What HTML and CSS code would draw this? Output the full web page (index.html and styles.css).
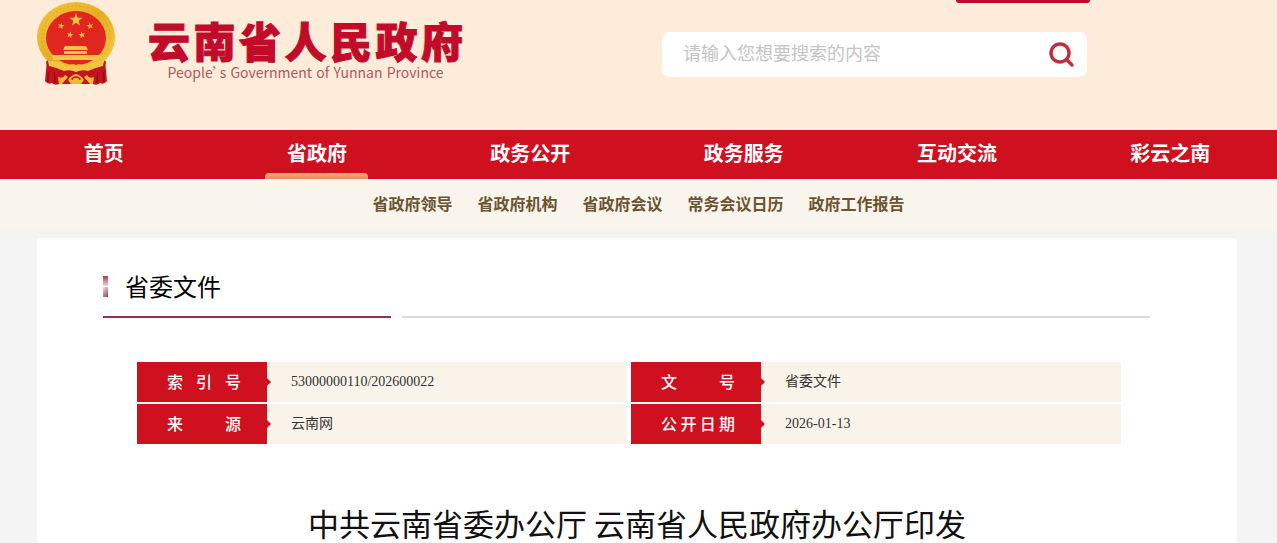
FILE: index.html
```html
<!DOCTYPE html>
<html lang="zh-CN">
<head>
<meta charset="utf-8">
<meta name="viewport" content="width=device-width, initial-scale=1">
<title>云南省人民政府</title>
<link rel="stylesheet" href="styles.css">
</head>
<body>
<header class="header">
  <a class="brand" href="#">
    <svg class="emblem" viewBox="0 0 80 86" aria-hidden="true">
      <defs>
        <linearGradient id="gold" x1="0" y1="0" x2="1" y2="1">
          <stop offset="0" stop-color="#f3c63c"/><stop offset=".5" stop-color="#e5ae24"/><stop offset="1" stop-color="#f6cf45"/>
        </linearGradient>
        <path id="star" d="M0-7 1.6-2.2H6.7L2.6.8 4.1 5.7 0 2.7-4.1 5.7-2.6.8-6.7-2.2H-1.6Z"/>
      </defs>
      <path d="M11 60 9 81Q12 85 16 83Q19 86 23 84H57Q61 86 64 83Q68 85 71 81L69 60Z" fill="#c5131c"/>
      <path d="M13 64 12 82M18 66 19 83M67 64 68 82M62 66 61 83" stroke="#8f0d18" stroke-width="1.5"/>
      <ellipse cx="40" cy="37" rx="39" ry="35" fill="url(#gold)"/>
      <path d="M10 61Q40 76 70 61L68 72H12Z" fill="#c5131c"/>
      <ellipse cx="40" cy="37" rx="34" ry="31" fill="none" stroke="#d39a1c" stroke-width="1" stroke-dasharray="2 2" opacity=".6"/>
      <ellipse cx="40" cy="38" rx="30" ry="27" fill="#e1261f"/>
      <g fill="#f4c443">
        <use href="#star" x="40" y="20"/>
        <use href="#star" transform="translate(25 26) scale(.5) rotate(12)"/>
        <use href="#star" transform="translate(54 26) scale(.5) rotate(-12)"/>
        <use href="#star" transform="translate(34 35) scale(.5) rotate(12)"/>
        <use href="#star" transform="translate(46 35) scale(.5) rotate(-12)"/>
        <path d="M29 46H50L52 50H27ZM28 51H51V54H28ZM16 55H64L63 60H17Z"/>
      </g>
      <path d="M12 61Q24 60 31 67Q35 63 40 65Q45 63 49 67Q56 60 68 61L67 66Q58 68 52 71Q46 69 40 72Q34 69 28 71Q22 68 13 66Z" fill="#f3c443"/>
      <path d="M22 77Q27 79 29 75L32 77 26 84H23ZM58 77Q53 79 51 75L48 77 54 84H57ZM32 80Q35 75 40 74Q45 75 48 80L45 84H35Z" fill="#efb936"/>
      <path d="M36 80a4 3 0 0 1 8 0" fill="none" stroke="#c5131c" stroke-width="1.5"/>
    </svg>
    <span class="brand-text">
      <span class="brand-name">云南省人民政府</span>
      <span class="brand-en" lang="en">People’s Government of Yunnan Province</span>
    </span>
  </a>
  <div class="tools">
    <div class="tab"></div>
    <form class="search" role="search">
      <input class="search-input" type="search" aria-label="搜索" placeholder="请输入您想要搜索的内容">
      <button class="search-button" type="button" aria-label="搜索">
        <svg class="search-icon" viewBox="0 0 26 26" fill="none" stroke="#c0303c" aria-hidden="true">
          <circle cx="11" cy="11" r="9" stroke-width="3.5"/><path d="M17.500 17.500 23 23" stroke-width="3.5" stroke-linecap="round"/>
        </svg>
      </button>
    </form>
  </div>
</header>
<nav class="nav" aria-label="主导航">
  <a class="nav-link" href="#">首页</a>
  <a class="nav-link nav-active" href="#">省政府</a>
  <a class="nav-link" href="#">政务公开</a>
  <a class="nav-link" href="#">政务服务</a>
  <a class="nav-link" href="#">互动交流</a>
  <a class="nav-link" href="#">彩云之南</a>
</nav>
<nav class="subnav" aria-label="省政府">
  <a class="subnav-link" href="#">省政府领导</a>
  <a class="subnav-link" href="#">省政府机构</a>
  <a class="subnav-link" href="#">省政府会议</a>
  <a class="subnav-link" href="#">常务会议日历</a>
  <a class="subnav-link" href="#">政府工作报告</a>
</nav>
<main class="page">
  <article class="card">
    <div class="section">
      <h2 class="section-title">省委文件</h2>
      <div class="section-rule"></div>
    </div>
    <table class="meta">
      <colgroup><col class="col-label"><col class="col-value"><col class="col-label"><col></colgroup>
      <tbody>
        <tr>
          <th class="meta-label" scope="row">索引号</th><td class="meta-value meta-left">53000000110/202600022</td>
          <th class="meta-label" scope="row">文号</th><td class="meta-value">省委文件</td>
        </tr>
        <tr>
          <th class="meta-label" scope="row">来源</th><td class="meta-value meta-left">云南网</td>
          <th class="meta-label" scope="row">公开日期</th><td class="meta-value">2026-01-13</td>
        </tr>
      </tbody>
    </table>
  </article>
  <h1 class="title">中共云南省委办公厅 云南省人民政府办公厅印发</h1>
</main>
</body>
</html>
```
FILE: styles.css
```css
* { box-sizing: border-box; }
body {
  margin: 0;
  background: #f4f4f4;
  color: #000;
  font-family: "Noto Sans CJK SC", sans-serif;
}
a { color: inherit; text-decoration: none; }

.header {
  display: flex;
  justify-content: space-between;
  align-items: flex-start;
  min-height: 130px;
  padding: 0 187px 0 36px;
  background: #fdecda;
}
.brand { display: flex; gap: 32px; }
.emblem { width: 80px; height: 86px; }
.brand-text {
  display: flex;
  flex-direction: column;
  align-items: center;
  width: 315px;
  padding-top: 16px;
}
.brand-name {
  width: 100%;
  color: #c20a29;
  font-size: 42px;
  font-weight: 900;
  line-height: 48px;
  text-align-last: justify;
  -webkit-text-stroke: 1px #c20a29;
}
.brand-en {
  width: 276px;
  color: #b9545c;
  font-size: 14px;
  line-height: 17px;
  font-feature-settings: "palt";
  text-align-last: justify;
  white-space: nowrap;
}

.tools { display: flex; flex-direction: column; width: 428px; }
.tab {
  align-self: flex-end;
  width: 134px;
  height: 3px;
  border-radius: 0 0 4px 4px;
  background: #bd0c2a;
}
.search {
  display: flex;
  align-items: center;
  height: 45px;
  margin: 29px 3px 0 0;
  padding: 0 12px 0 21px;
  border-radius: 8px;
  background: #fff;
}
.search-input {
  flex: 1;
  min-width: 0;
  padding: 0 0 4px;
  border: 0;
  outline: 0;
  background: none;
  font: 18px/27px "Noto Sans CJK SC", sans-serif;
}
.search-input::placeholder { color: #c4c4c4; }
.search-button {
  display: flex;
  padding: 0;
  border: 0;
  background: none;
}
.search-icon { width: 26px; height: 26px; }

.nav {
  display: grid;
  grid-template-columns: repeat(6, 1fr);
  margin-left: -3px;
  background: #cf101f;
}
.nav-link {
  display: flex;
  flex-direction: column;
  align-items: center;
  height: 49px;
  color: #fff;
  font-size: 20px;
  font-weight: 700;
  line-height: 46px;
}
.nav-active::after {
  content: "";
  width: 103px;
  height: 6px;
  margin-top: -3px;
  border-radius: 4px 4px 0 0;
  background: linear-gradient(#f5ab78, #e09060);
}
.subnav {
  display: flex;
  justify-content: center;
  gap: 25px;
  height: 50px;
  background: #f9f5ec;
  color: #6b5430;
  font-size: 16px;
  font-weight: 700;
  line-height: 48px;
}

.page {
  margin: 9px 40px 0 37px;
  border-radius: 3px 3px 0 0;
  background: #fff;
}
.card { padding: 31px 87px 0 66px; }
.section-title {
  display: flex;
  align-items: center;
  gap: 17px;
  margin: 0;
  font-size: 24px;
  font-weight: 400;
  line-height: 34px;
}
.section-title::before {
  content: "";
  width: 5px;
  height: 21px;
  background:
    linear-gradient(#a53a4c, #f0d8dc) top / 100% 10px no-repeat,
    linear-gradient(135deg, #f3e0e3, #a53a4c) bottom / 100% 10px no-repeat;
}
.section-rule {
  display: grid;
  grid-template-columns: 288px 1fr;
  gap: 11px;
  margin-top: 13px;
}
.section-rule::before,
.section-rule::after { content: ""; height: 2px; }
.section-rule::before { background: #9a3044; }
.section-rule::after { background: #dadada; }

.meta {
  width: calc(100% - 63px);
  margin: 42px 29px 0 34px;
  border-spacing: 0 2px;
  table-layout: fixed;
}
.col-label { width: 130px; }
.col-value { width: 37%; }
.meta-label {
  position: relative;
  height: 40px;
  padding: 0 26px 2px 30px;
  background: #cf101f;
  color: #fff;
  font-size: 16px;
  font-weight: 500;
  line-height: 24px;
  text-align: justify;
  text-align-last: justify;
}
.meta-label::after {
  content: "";
  position: absolute;
  top: 16px;
  left: 100%;
  border: 4px solid transparent;
  border-left-color: #cf101f;
  border-right-width: 0;
}
.meta-value {
  padding: 0 24px;
  background: #faf3e9;
  color: #333;
  font: 14px/20px "Liberation Serif", "Noto Sans CJK SC", serif;
}
.meta-left { border-right: 4px solid #fff; }

.title {
  margin: 0;
  padding: 56px 0 0;
  color: #111;
  font-size: 31px;
  font-weight: 400;
  line-height: 41px;
  text-align: center;
}
```
